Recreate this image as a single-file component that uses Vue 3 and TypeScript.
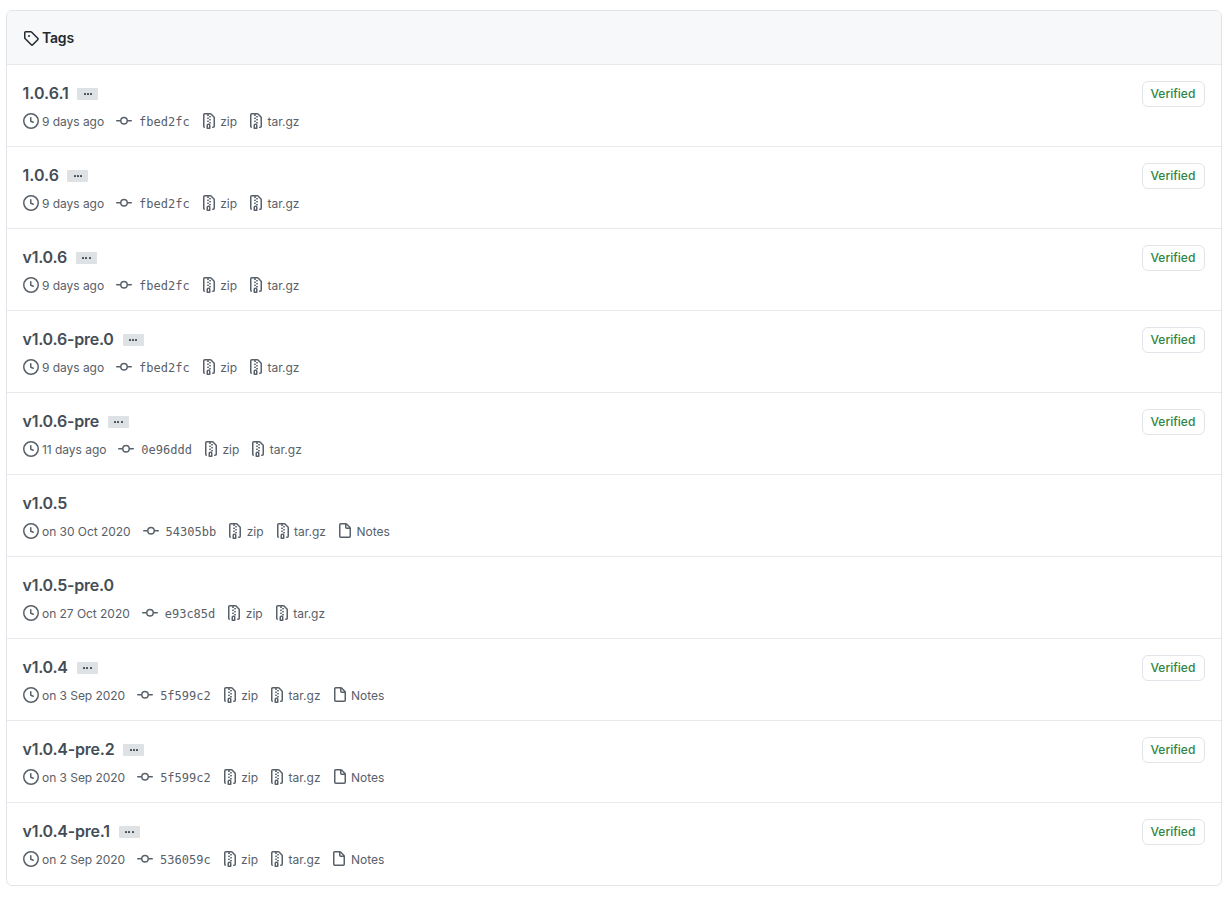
<template>
    <div class="tag-box">
        <header class="tag-header">
            <svg class="icon" viewBox="0 0 16 16"><path :d="icons.tag" /></svg>
            <h3 class="tag-header__title">Tags</h3>
        </header>
        <div v-for="tag in tags" :key="tag.name" class="tag-row">
            <div class="tag-main">
                <div class="tag-title">
                    <h4 class="tag-name" :class="{ 'tag-name--numeric': !tag.name.startsWith('v') }">{{ tag.name }}</h4>
                    <button v-if="tag.verified" class="tag-more" type="button">
                        <i></i><i></i><i></i>
                    </button>
                </div>
                <ul class="tag-meta">
                    <li class="meta-item meta-item--date">
                        <svg class="icon" viewBox="0 0 16 16"><path :d="icons.clock" /></svg>
                        <span>{{ tag.date }}</span>
                    </li>
                    <li class="meta-item">
                        <svg class="icon" viewBox="0 0 16 16"><path :d="icons.commit" /></svg>
                        <code>{{ tag.commit }}</code>
                    </li>
                    <li class="meta-item">
                        <svg class="icon" viewBox="0 0 16 16"><path :d="icons.zip" /></svg>
                        <span>zip</span>
                    </li>
                    <li class="meta-item">
                        <svg class="icon" viewBox="0 0 16 16"><path :d="icons.zip" /></svg>
                        <span>tar.gz</span>
                    </li>
                    <li v-if="tag.notes" class="meta-item">
                        <svg class="icon" viewBox="0 0 16 16"><path :d="icons.file" /></svg>
                        <span>Notes</span>
                    </li>
                </ul>
            </div>
            <span v-if="tag.verified" class="tag-verified">Verified</span>
        </div>
    </div>
</template>

<script setup lang="ts">
interface Tag {
    name: string;
    date: string;
    commit: string;
    verified?: boolean;
    notes?: boolean;
}

const tags: Tag[] = [
    { name: "1.0.6.1", date: "9 days ago", commit: "fbed2fc", verified: true },
    { name: "1.0.6", date: "9 days ago", commit: "fbed2fc", verified: true },
    { name: "v1.0.6", date: "9 days ago", commit: "fbed2fc", verified: true },
    { name: "v1.0.6-pre.0", date: "9 days ago", commit: "fbed2fc", verified: true },
    { name: "v1.0.6-pre", date: "11 days ago", commit: "0e96ddd", verified: true },
    { name: "v1.0.5", date: "on 30 Oct 2020", commit: "54305bb", notes: true },
    { name: "v1.0.5-pre.0", date: "on 27 Oct 2020", commit: "e93c85d" },
    { name: "v1.0.4", date: "on 3 Sep 2020", commit: "5f599c2", verified: true, notes: true },
    { name: "v1.0.4-pre.2", date: "on 3 Sep 2020", commit: "5f599c2", verified: true, notes: true },
    { name: "v1.0.4-pre.1", date: "on 2 Sep 2020", commit: "536059c", verified: true, notes: true },
];

const icons = {
    tag: "M2.5 7.775V2.75a.25.25 0 01.25-.25h5.025a.25.25 0 01.177.073l6.25 6.25a.25.25 0 010 .354l-5.025 5.025a.25.25 0 01-.354 0l-6.25-6.25a.25.25 0 01-.073-.177zm-1.5 0V2.75C1 1.784 1.784 1 2.75 1h5.025c.464 0 .91.184 1.238.513l6.25 6.25a1.75 1.75 0 010 2.474l-5.026 5.026a1.75 1.75 0 01-2.474 0l-6.25-6.25A1.75 1.75 0 011 7.775zM6 5a1 1 0 100 2 1 1 0 000-2z",
    clock: "M1.5 8a6.5 6.5 0 1113 0 6.5 6.5 0 01-13 0zM8 0a8 8 0 100 16A8 8 0 008 0zm.5 4.75a.75.75 0 00-1.5 0v3.5a.75.75 0 00.471.696l2.5 1a.75.75 0 00.557-1.392L8.5 7.742V4.75z",
    commit: "M10.5 7.75a2.5 2.5 0 11-5 0 2.5 2.5 0 015 0zm1.43.75a4.002 4.002 0 01-7.86 0H.75a.75.75 0 110-1.5h3.32a4.001 4.001 0 017.86 0h3.32a.75.75 0 110 1.5h-3.32z",
    zip: "M3.5 1.75a.25.25 0 01.25-.25h3a.75.75 0 000 1.5h.5a.75.75 0 000-1.5h2.086a.25.25 0 01.177.073l2.914 2.914a.25.25 0 01.073.177v8.586a.25.25 0 01-.25.25h-.5a.75.75 0 000 1.5h.5A1.75 1.75 0 0014 13.25V4.664c0-.464-.184-.909-.513-1.237L10.573.513A1.75 1.75 0 009.336 0H3.75A1.75 1.75 0 002 1.75v11.5c0 .649.353 1.214.874 1.515a.75.75 0 10.752-1.298.25.25 0 01-.126-.217V1.75zM8.75 3a.75.75 0 000 1.5h.5a.75.75 0 000-1.5h-.5zM6 5.25a.75.75 0 01.75-.75h.5a.75.75 0 010 1.5h-.5A.75.75 0 016 5.25zm2 1.5A.75.75 0 018.75 6h.5a.75.75 0 010 1.5h-.5A.75.75 0 018 6.75zm-1.25.75a.75.75 0 000 1.5h.5a.75.75 0 000-1.5h-.5zM8 9.75A.75.75 0 018.75 9h.5a.75.75 0 010 1.5h-.5A.75.75 0 018 9.75zm-.75.75a1.75 1.75 0 00-1.75 1.75v3c0 .414.336.75.75.75h2.5a.75.75 0 00.75-.75v-3a1.75 1.75 0 00-1.75-1.75h-.5zM7 12.25a.25.25 0 01.25-.25h.5a.25.25 0 01.25.25v2.25H7v-2.25z",
    file: "M3.75 1.5a.25.25 0 00-.25.25v11.5c0 .138.112.25.25.25h8.5a.25.25 0 00.25-.25V6H9.75A1.75 1.75 0 018 4.25V1.5H3.75zm5.75.56v2.19c0 .138.112.25.25.25h2.19L9.5 2.06zM2 1.75C2 .784 2.784 0 3.75 0h5.086c.464 0 .909.184 1.237.513l3.414 3.414c.329.328.513.773.513 1.237v8.086A1.75 1.75 0 0112.25 15h-8.5A1.75 1.75 0 012 13.25V1.75z",
};
</script>

<style>
body {
    margin: 0;
    background: #fff;
}
</style>

<style scoped>
.tag-box {
    box-sizing: border-box;
    width: 1216px;
    margin: 10px 0 0 6px;
    border: 1px solid #e1e4e8;
    border-radius: 6px;
    color: #586069;
    font-family: Inter, "Liberation Sans", sans-serif;
    font-size: 12px;
    line-height: 18px;
}

.icon {
    display: block;
    flex: none;
    width: 16px;
    height: 16px;
    fill: currentColor;
    fill-rule: evenodd;
}

.tag-header {
    display: flex;
    align-items: center;
    height: 53px;
    padding: 0 16px;
    border-radius: 5px 5px 0 0;
    background: #f6f8fa;
    color: #24292e;
}

.tag-header__title {
    margin: 0 0 0 3px;
    font-size: 14px;
    font-weight: 600;
    line-height: 20px;
    letter-spacing: -0.2px;
}

.tag-row {
    box-sizing: border-box;
    display: flex;
    align-items: flex-start;
    justify-content: space-between;
    height: 82px;
    padding: 16px 16px 0;
    border-top: 1px solid #e8ebee;
}

.tag-row:last-child {
    height: 83px;
}

.tag-title {
    display: flex;
    align-items: center;
    height: 24px;
}

.tag-name {
    margin: 0 0 0 -0.5px;
    color: #444d56;
    font-size: 16px;
    font-weight: 600;
    line-height: 24px;
    letter-spacing: -0.23px;
}

.tag-name--numeric {
    letter-spacing: 0;
}

.tag-more {
    display: flex;
    align-items: center;
    justify-content: center;
    gap: 1.3px;
    width: 21px;
    height: 12px;
    margin: 2px 0 0 9px;
    padding: 0;
    border: 0;
    border-radius: 1px;
    background: #dfe2e5;
}

.tag-more i {
    width: 2px;
    height: 2px;
    border-radius: 0.6px;
    background: #444d56;
}

.tag-name--numeric + .tag-more {
    margin-left: 8.5px;
}

.tag-meta {
    display: flex;
    margin: 8px 0 0;
    padding: 0;
    list-style: none;
}

.meta-item {
    display: flex;
    height: 18px;
    margin-right: 11px;
}

.meta-item span {
    margin-left: 3.5px;
}

.meta-item--date {
    margin-right: 12px;
    letter-spacing: -0.04px;
}

.meta-item--date span {
    margin-left: 3px;
}

.meta-item code {
    margin-left: 7px;
    font-family: "DejaVu Sans Mono", "Liberation Mono", monospace;
    font-size: 12px;
}

.tag-verified {
    box-sizing: border-box;
    width: 63px;
    height: 26px;
    padding: 3px 0 3px 7.5px;
    border: 1px solid #e1e4e8;
    border-radius: 6px;
    color: #2f8540;
    font-weight: 500;
}
</style>
